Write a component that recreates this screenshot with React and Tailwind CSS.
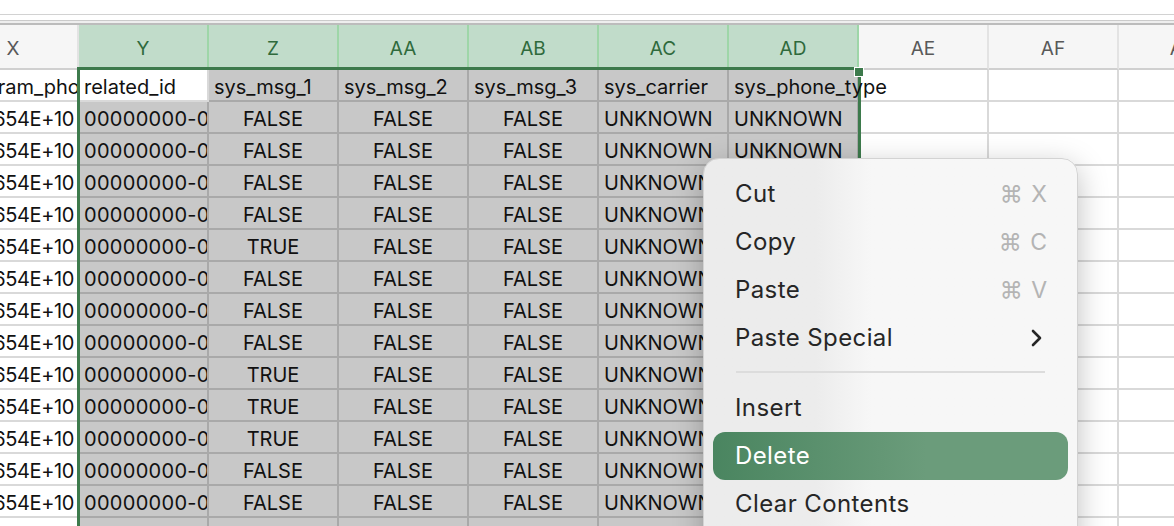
import React from 'react';

const font = { fontFamily: 'Inter, "Noto Sans", sans-serif' };

const cols = [
  { key: 'X', sel: false },
  { key: 'Y', sel: true },
  { key: 'Z', sel: true },
  { key: 'AA', sel: true },
  { key: 'AB', sel: true },
  { key: 'AC', sel: true },
  { key: 'AD', sel: true },
  { key: 'AE', sel: false },
  { key: 'AF', sel: false },
  { key: 'AG', sel: false },
];

const flags = ['FALSE', 'FALSE', 'FALSE', 'FALSE', 'TRUE', 'FALSE', 'FALSE', 'FALSE', 'TRUE', 'TRUE', 'TRUE', 'FALSE', 'FALSE', 'FALSE'];

const rows = [
  { X: 'program_phone', Y: 'related_id', Z: 'sys_msg_1', AA: 'sys_msg_2', AB: 'sys_msg_3', AC: 'sys_carrier', AD: 'sys_phone_type', head: true },
  ...flags.map((f) => ({
    X: '1.20654E+10',
    Y: '00000000-0000-0000',
    Z: f,
    AA: 'FALSE',
    AB: 'FALSE',
    AC: 'UNKNOWN',
    AD: 'UNKNOWN',
  })),
];

const Cell = ({ col, row, ri }) => {
  const text = row[col.key] || '';
  const active = ri === 0 && col.key === 'Y';
  const isSel = col.sel && !active;
  const center = !row.head && ['Z', 'AA', 'AB'].includes(col.key);
  const right = !row.head && col.key === 'X';
  const overflow = row.head && col.key === 'AD';
  return (
    <div
      className={`h-[32px] w-[130px] shrink-0 border-r-2 border-b-2 flex items-center pt-[3px] whitespace-nowrap text-[20px] text-[#111] ${
        right ? 'pl-[5px] pr-[3px] tracking-[-0.4px]' : 'px-[5px]'
      } ${overflow ? 'overflow-visible' : 'overflow-hidden'} ${
        isSel ? 'bg-[#c8c8c8] border-[#a9a9a9]' : 'bg-white border-[#d9d9d9]'
      } ${active ? 'border-[#a9a9a9]' : ''} ${center ? 'justify-center' : right ? 'justify-end' : 'justify-start'}`}
    >
      <span className={overflow ? 'relative z-10' : col.key === 'Y' && !row.head ? 'tracking-[0.3px]' : ''}>{text}</span>
    </div>
  );
};

const MenuItem = ({ label, shortcut, arrow, hot }) => (
  <div
    className={`h-[48px] mx-[9px] pl-[22px] rounded-[12px] flex items-center justify-between text-[24px] tracking-[0.4px] ${
      arrow ? 'pr-[24px]' : 'pr-[20px]'
    } ${hot ? 'bg-linear-to-r from-[#4a8560] to-[#6b9c7b] to-60% text-white' : 'text-[#262626]'}`}
  >
    <span>{label}</span>
    {shortcut && <span className="text-[#b4b4b4] text-[23px] tracking-[1px]">⌘ {shortcut}</span>}
    {arrow && (
      <svg width="14" height="20" viewBox="0 0 14 20">
        <polyline points="3,3 10,10 3,17" fill="none" stroke="#262626" strokeWidth="2.6" strokeLinecap="round" strokeLinejoin="round" />
      </svg>
    )}
  </div>
);

export default function App() {
  return (
    <div className="relative w-[1174px] h-[526px] overflow-hidden bg-white" style={font}>
      <div className="h-[14px] bg-white" />
      <div className="h-px bg-[#d2d2d2]" />
      <div className="h-[5px] bg-white" />
      <div className="h-px bg-[#cbcbcb]" />
      <div className="h-[2px] bg-[#eeeeee]" />
      <div className="h-[2px] bg-[#bcbcbc]" />

      <div className="-ml-[51px]">
        <div className="flex">
          {cols.map((c) => (
            <div
              key={c.key}
              className={`h-[45px] w-[130px] shrink-0 border-r-2 border-b-2 flex items-center justify-center pt-[5px] text-[19px] ${
                c.sel
                  ? 'bg-[#c1dcca] text-[#2f6a3c] border-r-[#9ed6a8] border-b-[#3d7a4c]'
                  : 'bg-[#f6f6f6] text-[#595959] border-r-[#e3e3e3] border-b-[#d0d0d0]'
              } ${c.key === 'X' ? 'border-r-[#9ed6a8]' : ''}`}
            >
              {c.key}
            </div>
          ))}
        </div>
        {rows.map((row, ri) => (
          <div key={ri} className="flex">
            {cols.map((c) => (
              <Cell key={c.key} col={c} row={row} ri={ri} />
            ))}
          </div>
        ))}
      </div>

      {/* selection outline */}
      <div className="absolute left-[77px] top-[67px] w-[784px] h-[480px] border-[3px] border-b-0 border-[#3d7a4c] pointer-events-none" />
      <div className="absolute left-[854px] top-[67px] w-[10px] h-[10px] bg-[#3d7a4c] border border-white" />

      {/* context menu */}
      <div className="absolute left-[703px] top-[158px] w-[375px] h-[400px] rounded-[16px] border border-[#d3d3d3] bg-linear-to-r from-[#ececec] from-30% to-[#f7f7f7] to-45% shadow-[0_8px_30px_rgba(0,0,0,0.25)] pt-[11px]">
        <MenuItem label="Cut" shortcut="X" />
        <MenuItem label="Copy" shortcut="C" />
        <MenuItem label="Paste" shortcut="V" />
        <MenuItem label="Paste Special" arrow />
        <div className="mx-[32px] mt-[9px] mb-[11px] h-[2px] bg-[#dcdcdc]" />
        <MenuItem label="Insert" />
        <MenuItem label="Delete" hot />
        <MenuItem label="Clear Contents" />
      </div>
    </div>
  );
}
